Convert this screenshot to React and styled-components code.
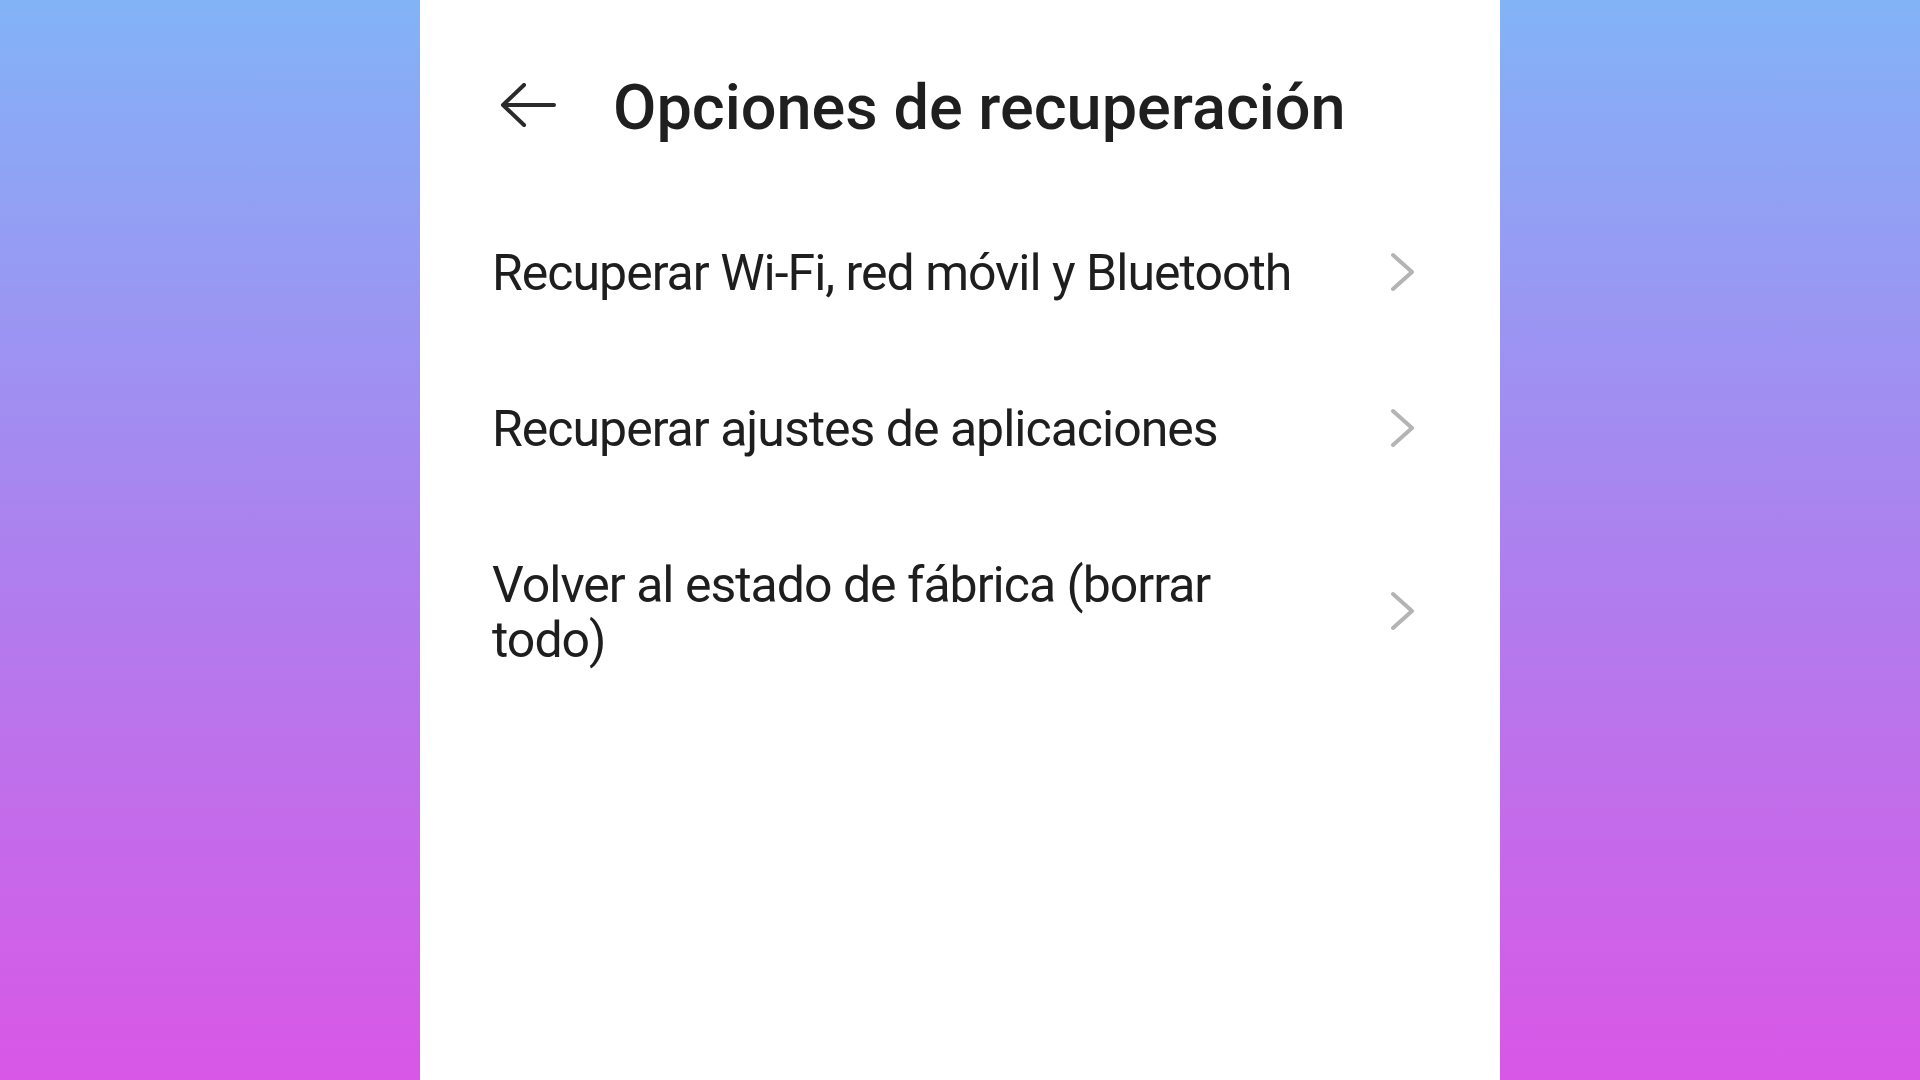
import React from "react";
import styled, { createGlobalStyle } from "styled-components";

const Global = createGlobalStyle`
  html, body { margin: 0; padding: 0; }
  body {
    width: 1920px;
    height: 1080px;
    overflow: hidden;
    font-family: Roboto, "Noto Sans", "Liberation Sans", sans-serif;
  }
`;

const Page = styled.div`
  width: 1920px;
  height: 1080px;
  display: flex;
  justify-content: center;
  background: linear-gradient(180deg, #82b3f7 0%, #aa83ef 48%, #d957e6 100%);
`;

const Panel = styled.div`
  width: 1080px;
  height: 100%;
  background: #ffffff;
  display: flex;
  flex-direction: column;
`;

const Header = styled.header`
  height: 196px;
  box-sizing: border-box;
  padding: 0 0 0 80px;
  display: flex;
  align-items: center;
  gap: 57px;
  margin-top: 9px;
  margin-bottom: -9px;
`;

const BackButton = styled.button`
  border: 0;
  background: none;
  padding: 0;
  width: 56px;
  height: 44px;
  margin-bottom: 4px;
  display: flex;
  align-items: center;
  justify-content: center;
  color: #2b2b2b;
  cursor: pointer;
`;

const Title = styled.h1`
  margin: 0;
  font-size: 63px;
  font-weight: 500;
  color: #1f1f1f;
  letter-spacing: 0;
  white-space: nowrap;
`;

const List = styled.ul`
  list-style: none;
  margin: 0;
  padding: 0;
`;

const Row = styled.li`
  display: flex;
  align-items: center;
  justify-content: space-between;
  padding: 50px 86px 51px 72px;
`;

const Label = styled.span`
  max-width: 830px;
  font-size: 50px;
  line-height: 55px;
  letter-spacing: -1px;
  color: #1e1e1e;
`;

const Chevron = styled.span`
  display: flex;
  width: 24px;
  height: 40px;
  margin-bottom: 4px;
  align-items: center;
  justify-content: flex-end;
  color: #b4b4b4;
`;

const BackArrow = () => (
  <svg width="56" height="44" viewBox="0 0 56 44" fill="none">
    <path
      d="M54 22H3M24 2L3 22l21 20"
      stroke="currentColor"
      strokeWidth="4"
      strokeLinecap="round"
      strokeLinejoin="round"
    />
  </svg>
);

const ChevronIcon = () => (
  <svg width="24" height="40" viewBox="0 0 24 40" fill="none">
    <path
      d="M3 3l19 17L3 37"
      stroke="currentColor"
      strokeWidth="4"
      strokeLinecap="round"
      strokeLinejoin="round"
    />
  </svg>
);

const items = [
  "Recuperar Wi-Fi, red móvil y Bluetooth",
  "Recuperar ajustes de aplicaciones",
  "Volver al estado de fábrica (borrar todo)",
];

export default function App() {
  return (
    <>
      <Global />
      <Page>
        <Panel>
          <Header>
            <BackButton aria-label="Atrás">
              <BackArrow />
            </BackButton>
            <Title>Opciones de recuperación</Title>
          </Header>
          <List>
            {items.map((t) => (
              <Row key={t}>
                <Label>{t}</Label>
                <Chevron>
                  <ChevronIcon />
                </Chevron>
              </Row>
            ))}
          </List>
        </Panel>
      </Page>
    </>
  );
}
